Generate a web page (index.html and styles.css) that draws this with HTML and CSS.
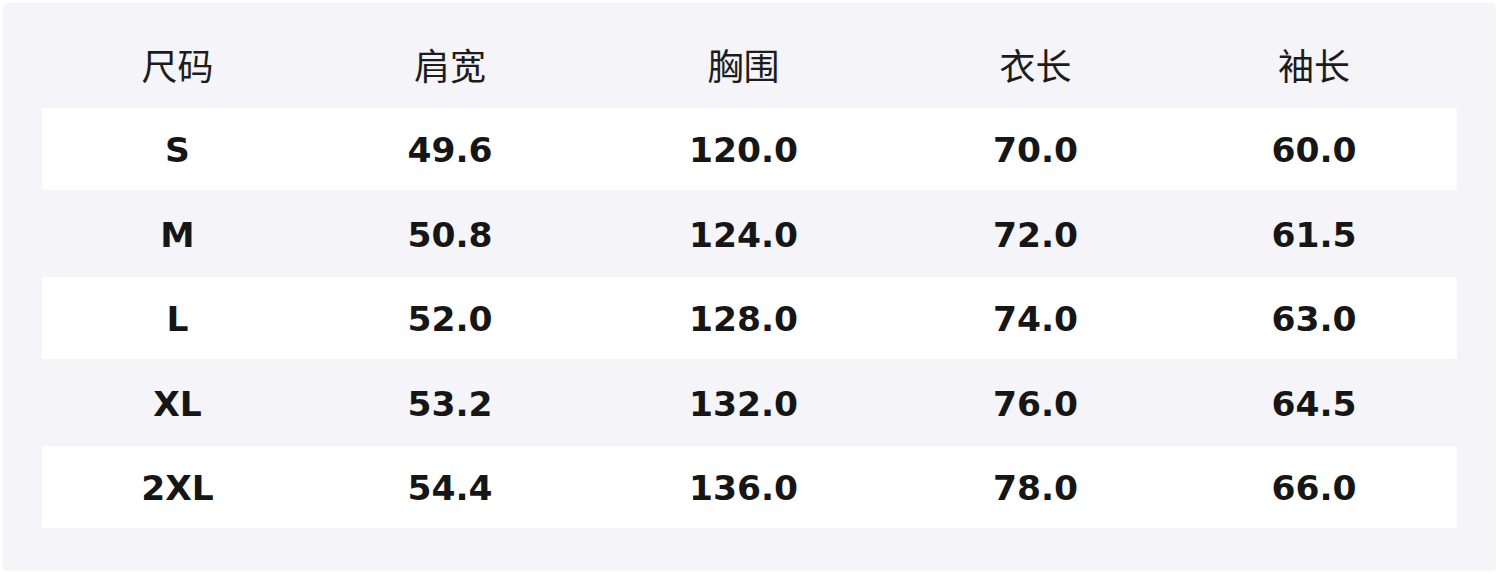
FILE: index.html
```html
<!DOCTYPE html>
<html lang="zh">
<head>
<meta charset="utf-8">
<title>尺码表</title>
<link rel="stylesheet" href="styles.css">
</head>
<body>
<div class="panel">
  <div class="row head">
    <div class="cell">尺码</div>
    <div class="cell">肩宽</div>
    <div class="cell">胸围</div>
    <div class="cell">衣长</div>
    <div class="cell">袖长</div>
  </div>
  <div class="rows">
    <div class="row data white">
      <div class="cell">S</div><div class="cell">49.6</div><div class="cell">120.0</div><div class="cell">70.0</div><div class="cell">60.0</div>
    </div>
    <div class="row data">
      <div class="cell">M</div><div class="cell">50.8</div><div class="cell">124.0</div><div class="cell">72.0</div><div class="cell">61.5</div>
    </div>
    <div class="row data white">
      <div class="cell">L</div><div class="cell">52.0</div><div class="cell">128.0</div><div class="cell">74.0</div><div class="cell">63.0</div>
    </div>
    <div class="row data">
      <div class="cell">XL</div><div class="cell">53.2</div><div class="cell">132.0</div><div class="cell">76.0</div><div class="cell">64.5</div>
    </div>
    <div class="row data white">
      <div class="cell">2XL</div><div class="cell">54.4</div><div class="cell">136.0</div><div class="cell">78.0</div><div class="cell">66.0</div>
    </div>
  </div>
</div>
</body>
</html>
```
FILE: styles.css
```css
html, body {
  margin: 0;
  padding: 0;
  background: #ffffff;
}
body {
  padding: 3px 4px 3px 3px;
  font-family: "DejaVu Sans", "Noto Sans CJK SC", sans-serif;
  color: #161616;
}
.panel {
  width: 1493px;
  height: 568px;
  box-sizing: border-box;
  background: #f4f4f9;
  border-radius: 4px;
  padding: 43px 39px 0 39px;
}
.row {
  display: grid;
  grid-template-columns: 271fr 274fr 313fr 271fr 286fr;
  align-items: center;
}
.cell {
  text-align: center;
}
.head {
  height: 36px;
  margin-bottom: 26px;
  font-family: "Noto Sans CJK SC", sans-serif;
  font-size: 36px;
  line-height: 36px;
  font-weight: 400;
  color: #1c1c1c;
}
.rows {
  display: flex;
  flex-direction: column;
  gap: 2.5px;
}
.data {
  height: 82px;
  box-sizing: border-box;
  padding-top: 3px;
  font-size: 34.5px;
  font-weight: 700;
  line-height: 1;
  border-radius: 2px;
}
.white {
  background: #ffffff;
}
```
